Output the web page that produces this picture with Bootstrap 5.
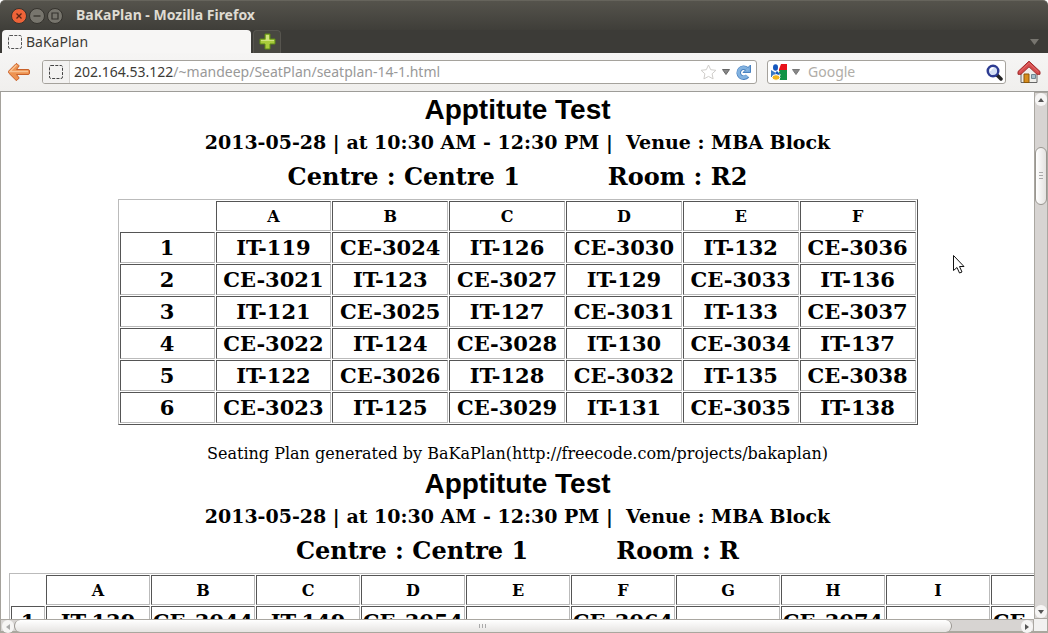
<!DOCTYPE html>
<html lang="en">
<head>
<meta charset="utf-8">
<meta name="viewport" content="width=device-width, initial-scale=1">
<title>BaKaPlan</title>
<link href="https://cdn.jsdelivr.net/npm/bootstrap@5.3.0/dist/css/bootstrap.min.css" rel="stylesheet">
<style>
body { font-family: "Noto Sans", "Open Sans", sans-serif; font-size: 14px; line-height: 20px; color: #3c3b37; background: #fff; }
button { border: 0; padding: 0; background: none; color: inherit; }
svg { display: block; }
.titlebar { height: 30px; background: linear-gradient(#55534c, #3f3e39); border-top: 1px solid #66645c; border-radius: 5px 5px 0 0; padding-left: 11px; gap: 2px; }
.window-title { color: #dfdbd2; font-size: 14px; font-weight: 700; margin-left: 11px; padding-bottom: 2px; }
.tabstrip { height: 23px; background: #3c3b37; padding: 0 9px 0 2px; gap: 2px; }
.page-tab { width: 249px; height: 23px; background: #f7f6f5; border-radius: 4px 4px 0 0; padding-left: 6px; gap: 4px; }
.new-tab { width: 28px; height: 23px; background: #484741; border: 1px solid #57554f; border-bottom: 0; border-radius: 4px 4px 0 0; padding: 0 0 2px 5px; }
.toolbar-row { height: 39px; background: linear-gradient(#f6f5f4, #f0efed); border-bottom: 1px solid #9d9c98; padding: 0 7px 0 8px; }
.field { height: 24px; background: #fff; border: 1px solid #a5a29c; border-radius: 3px; }
.identity { width: 27px; height: 22px; background: #f3f2f1; border-right: 1px solid #d5d3d0; padding-left: 6px; }
.field-icons { padding: 0 4px 0 0; gap: 5px; }
.search { width: 239px; margin: 0 11px 0 10px; padding: 0 2px 0 3px; }
.search input { border: 0; outline: 0; min-width: 0; padding: 0; color: #3c3b37; font-size: 14px; }
.search input::placeholder { color: #b0ada8; opacity: 1; }
.path { color: #999; }
.page-view { border-left: 1px solid #a5a29c; color: #000; font-family: "DejaVu Serif", serif; }
.sheet { padding: 2px 8px 4px; }
.sheet + .sheet { padding-top: 0; }
.sheet h1 { font: 700 28px/32px "Liberation Sans", Arial, sans-serif; }
.sheet h2 { font-size: 19px; line-height: 32px; font-weight: 700; white-space: pre; }
.sheet h3 { font-size: 24px; line-height: 38px; font-weight: 700; gap: 88px; margin-bottom: 3px; }
.credit { font-size: 16px; line-height: 20px; margin-top: 19px; }
.seats { table-layout: fixed; border-collapse: separate; border-spacing: 1px; border: 1px solid; border-color: #bbb #555 #555 #bbb; text-align: center; white-space: nowrap; }
.seats th, .seats td { border: 1px solid; border-color: #555 #bbb #bbb #555; padding: 0; font-size: 21px; line-height: 29px; font-weight: 700; text-align: center; }
.seats thead th { font-size: 16px; line-height: 26px; padding-top: 2px; }
.seats thead td { border: 0; }
.seats-six { width: 800px; }
.seats-six col:first-child { width: 95px; }
.seats-wide { width: 1088px; }
.seats-wide col:first-child { width: 34px; }
.vscroll { width: 14px; background: #d7d4d2; border: 1px solid #aaa7a1; }
.hscroll { height: 14px; background: #d7d4d2; border: 1px solid #aaa7a1; border-bottom: 2px solid #a9a79e; padding-left: 1px; }
.scroll-cap { background: #f6f5f4; border-radius: 6px; width: 12px; height: 13px; }
.v-thumb { height: 58px; border: 1px solid #999690; border-radius: 6px; background: linear-gradient(90deg, #fff, #e4e2e0); margin-top: 41px; }
.h-thumb { width: 91%; height: 12px; border: 1px solid #999690; border-width: 0 1px; border-radius: 6px; background: linear-gradient(#fff, #e6e4e2); }
.corner { width: 14px; background: #f2f1f0; border-right: 1px solid #a9a79e; border-bottom: 2px solid #a9a79e; }
.pointer { top: 162px; left: 951px; }
</style>
</head>
<body class="vh-100 overflow-hidden d-flex flex-column">
<header class="flex-shrink-0">
  <div class="titlebar d-flex align-items-center">
    <button aria-label="Close"><svg width="16" height="16"><circle cx="8" cy="8" r="7.5" fill="#ee6338" stroke="#35332e"/><path d="M5.500 5.500l5 5m0-5l-5 5" stroke="#5b2415" stroke-width="1.3"/></svg></button>
    <button aria-label="Minimize"><svg width="16" height="16"><circle cx="8" cy="8" r="7.5" fill="#77756d" stroke="#35332e"/><path d="M4.500 8h7" stroke="#35332e" stroke-width="1.3"/></svg></button>
    <button aria-label="Maximize"><svg width="16" height="16"><circle cx="8" cy="8" r="7.5" fill="#77756d" stroke="#35332e"/><path d="M5 5h6v6H5z" fill="none" stroke="#35332e" stroke-width="1.2"/></svg></button>
    <span class="window-title">BaKaPlan - Mozilla Firefox</span>
  </div>
  <div class="tabstrip d-flex align-items-center">
    <button class="page-tab d-flex align-items-center"><svg width="14" height="14"><rect x=".5" y=".5" width="13" height="13" rx="1.5" fill="none" stroke="#555" stroke-dasharray="3 1.3"/></svg><span>BaKaPlan</span></button>
    <button class="new-tab" aria-label="Open a new tab"><svg width="17" height="17"><path d="M6 1h5v5h5v5h-5v5H6v-5H1V6h5z" fill="#a9cb3c" stroke="#5d8a16"/><path d="M7 2h3v5h5v1H2V7h5z" fill="#cfe27c"/></svg></button>
    <button class="ms-auto" aria-label="List all tabs"><svg width="9" height="6"><path d="M0 0h9L4.500 6z" fill="#77756f"/></svg></button>
  </div>
  <nav class="toolbar-row d-flex align-items-center">
    <button class="me-2 pe-1" aria-label="Back"><svg width="22" height="18"><path d="M9 .7L11.200 2.900 8.500 6.500H20q1.500 0 1.500 1.500v2q0 1.500-1.500 1.500H8.500L11.200 15 9 17.300h-1L.7 10V8L8 .7z" fill="#ee9350" stroke="#c8612a"/><path d="M8.500 2L2 8.500h18" fill="none" stroke="#f8c393" stroke-width="1.300"/></svg></button>
    <div class="field d-flex align-items-center flex-grow-1 overflow-hidden">
      <span class="identity d-flex align-items-center"><svg width="14" height="14"><rect x=".5" y=".5" width="13" height="13" rx="1.5" fill="none" stroke="#444" stroke-dasharray="3 1.300"/></svg></span>
      <span class="flex-grow-1 ps-1 text-nowrap" role="textbox" aria-label="Address">202.164.53.122<span class="path">/~mandeep/SeatPlan/seatplan-14-1.html</span></span>
      <span class="field-icons d-flex align-items-center">
        <button aria-label="Bookmark"><svg width="17" height="16"><path d="M8.500 1l2.200 4.700 5.200.6-3.800 3.500 1 5.100-4.600-2.500-4.600 2.500 1-5.100L1.100 6.300l5.200-.6z" fill="#fff" stroke="#cfcdca"/></svg></button>
        <button aria-label="History"><svg width="8" height="6"><path d="M.5.5h7L4 5.500z" fill="#888" stroke="#666"/></svg></button>
        <button aria-label="Reload"><svg width="17" height="17"><path d="M12 5A5 5 0 1 0 12.500 12" fill="none" stroke="#4a82c0" stroke-width="4.600"/><path d="M12 5A5 5 0 1 0 12.300 11.800" fill="none" stroke="#82b2e0" stroke-width="3"/><path d="M15.500 1v7.500H8z" fill="#74a7da" stroke="#4a82c0"/><path d="M11.500 4.500l2 2" stroke="#82b2e0" stroke-width="3"/></svg></button>
      </span>
    </div>
    <div class="search field d-flex align-items-center flex-shrink-0">
      <svg width="17" height="17" class="flex-shrink-0"><path d="M8 0h8v7H8z" fill="#e8131b"/><path d="M9 6h7v10H9q-3-4 0-10z" fill="#109447"/><path d="M0 6l5 3v4H0z" fill="#3b78c3"/><path d="M5 0h5L7 8l3 3-3 2-3-4z" fill="#fff"/><ellipse cx="4.500" cy="3.500" rx="2.500" ry="3.200" fill="#1557bd"/><path d="M6 7l3 3-2 2-3-3z" fill="#1557bd"/><ellipse cx="5" cy="13.500" rx="4" ry="2.800" fill="#f3b51c" stroke="#fff"/></svg>
      <svg width="8" height="6" class="ms-1 me-2 flex-shrink-0"><path d="M.5.500h7L4 5.500z" fill="#888" stroke="#777"/></svg>
      <input class="flex-grow-1" type="text" placeholder="Google" aria-label="Search with Google">
      <button aria-label="Search"><svg width="17" height="17"><path d="M11 11l4 4" stroke="#222" stroke-width="3.500" stroke-linecap="round"/><circle cx="7" cy="7" r="5.300" fill="#d4e0f5" stroke="#2d3c92" stroke-width="2.400"/><path d="M4.500 7a2.500 3 0 0 1 3-3" stroke="#fff" stroke-width="1.500" fill="none"/></svg></button>
    </div>
    <button aria-label="Home"><svg width="24" height="24"><path d="M4 11l8-7 8 7v11.500H4z" fill="#efeeea" stroke="#666"/><path d="M7 14h5v8.500H7z" fill="#d78d1c" stroke="#8b5708"/><path d="M14.500 14.500h4v4h-4z" fill="#a7bfca" stroke="#6f8691"/><path d="M12 1.200L1 11.500v2.800h3l8-7.500 8 7.500h3v-2.800z" fill="#d64b4b" stroke="#9f2929"/><path d="M2.500 12L12 3.200l9.500 8.800" fill="none" stroke="#e06a6a"/></svg></button>
  </nav>
</header>
<div class="d-flex flex-grow-1 overflow-hidden position-relative">
  <main class="page-view flex-grow-1 overflow-hidden">
    <section class="sheet">
      <h1 class="text-center mb-0">Apptitute Test</h1>
      <h2 class="text-center mb-0">2013-05-28 | at 10:30 AM - 12:30 PM |  Venue : MBA Block</h2>
      <h3 class="d-flex justify-content-center"><span>Centre : Centre 1</span><span>Room : R2</span></h3>
      <table class="seats seats-six mx-auto">
        <colgroup><col><col span="6"></colgroup>
        <thead><tr><td></td><th>A</th><th>B</th><th>C</th><th>D</th><th>E</th><th>F</th></tr></thead>
        <tbody>
          <tr><th>1</th><td>IT-119</td><td>CE-3024</td><td>IT-126</td><td>CE-3030</td><td>IT-132</td><td>CE-3036</td></tr>
          <tr><th>2</th><td>CE-3021</td><td>IT-123</td><td>CE-3027</td><td>IT-129</td><td>CE-3033</td><td>IT-136</td></tr>
          <tr><th>3</th><td>IT-121</td><td>CE-3025</td><td>IT-127</td><td>CE-3031</td><td>IT-133</td><td>CE-3037</td></tr>
          <tr><th>4</th><td>CE-3022</td><td>IT-124</td><td>CE-3028</td><td>IT-130</td><td>CE-3034</td><td>IT-137</td></tr>
          <tr><th>5</th><td>IT-122</td><td>CE-3026</td><td>IT-128</td><td>CE-3032</td><td>IT-135</td><td>CE-3038</td></tr>
          <tr><th>6</th><td>CE-3023</td><td>IT-125</td><td>CE-3029</td><td>IT-131</td><td>CE-3035</td><td>IT-138</td></tr>
        </tbody>
      </table>
      <p class="credit text-center mb-0">Seating Plan generated by BaKaPlan(http://freecode.com/projects/bakaplan)</p>
    </section>
    <section class="sheet">
      <h1 class="text-center mb-0">Apptitute Test</h1>
      <h2 class="text-center mb-0">2013-05-28 | at 10:30 AM - 12:30 PM |  Venue : MBA Block</h2>
      <h3 class="d-flex justify-content-center"><span>Centre : Centre 1</span><span>Room : R</span></h3>
      <table class="seats seats-wide">
        <colgroup><col><col span="10"></colgroup>
        <thead><tr><td></td><th>A</th><th>B</th><th>C</th><th>D</th><th>E</th><th>F</th><th>G</th><th>H</th><th>I</th><th></th></tr></thead>
        <tbody><tr><th>1</th><td>IT-139</td><td>CE-3044</td><td>IT-149</td><td>CE-3054</td><td></td><td>CE-3064</td><td></td><td>CE-3074</td><td></td><td>CE-3084</td></tr></tbody>
      </table>
    </section>
  </main>
  <div class="vscroll flex-shrink-0 d-flex flex-column">
    <div class="scroll-cap d-flex align-items-center justify-content-center"><svg width="6" height="4"><path d="M3 0l3 4H0z" fill="#555"/></svg></div>
    <div class="v-thumb d-flex align-items-center justify-content-center flex-shrink-0"><svg width="4" height="8"><path d="M0 .5h4M0 3.500h4M0 6.500h4" stroke="#aaa"/></svg></div>
    <div class="scroll-cap mt-auto d-flex align-items-center justify-content-center"><svg width="6" height="4"><path d="M3 4l3-4H0z" fill="#555"/></svg></div>
  </div>
  <svg class="pointer position-absolute" width="16" height="22"><path d="M2.500 1.500v15l3.500-3 2.500 5.500 2.500-1-2.500-5.500h4.500z" fill="#fff" stroke="#111"/></svg>
</div>
<div class="d-flex flex-shrink-0">
  <div class="hscroll d-flex flex-grow-1">
    <div class="scroll-cap d-flex align-items-center justify-content-center"><svg width="4" height="6"><path d="M0 3l4-3v6z" fill="#aaa"/></svg></div>
    <div class="h-thumb d-flex align-items-center justify-content-center"><svg width="8" height="4"><path d="M.5 0v4M3.500 0v4M6.500 0v4" stroke="#aaa"/></svg></div>
    <div class="scroll-cap ms-auto d-flex align-items-center justify-content-center"><svg width="4" height="6"><path d="M4 3L0 0v6z" fill="#555"/></svg></div>
  </div>
  <div class="corner"></div>
</div>
<script src="https://cdn.jsdelivr.net/npm/bootstrap@5.3.0/dist/js/bootstrap.bundle.min.js"></script>
</body>
</html>
